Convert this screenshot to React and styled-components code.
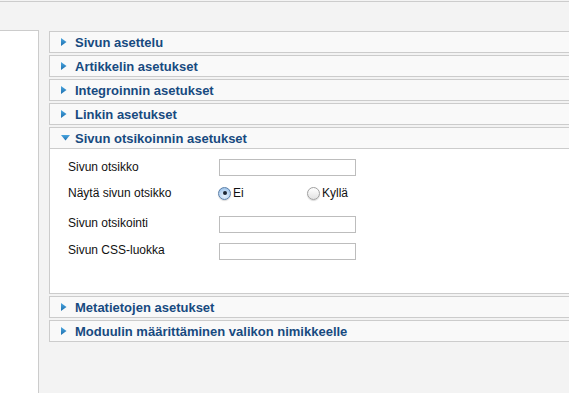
import React from "react";
import styled, { createGlobalStyle } from "styled-components";

const Global = createGlobalStyle`
  html, body { margin: 0; padding: 0; background: #f3f3f3; }
  body { font-family: "Liberation Sans", Arial, Helvetica, sans-serif; overflow: hidden; }
  #root { width: 569px; height: 393px; overflow: hidden; }
`;

const Page = styled.div`
  width: 569px;
  height: 393px;
  overflow: hidden;
  display: flex;
  flex-direction: column;
`;

const TopBar = styled.div`
  margin-top: 1px;
  height: 28px;
  border-top: 1px solid #cccccc;
  background: #f3f3f3;
  flex: none;
`;

const Main = styled.div`
  display: flex;
  gap: 10px;
  flex: 1;
`;

const SidePanel = styled.div`
  width: 38px;
  flex: none;
  background: #ffffff;
  border-top: 1px solid #cccccc;
  border-right: 1px solid #cccccc;
`;

const Accordion = styled.div`
  flex: 1;
  margin-right: -20px;
  padding-top: 1px;
  display: flex;
  flex-direction: column;
  gap: 2px;
`;

const Panel = styled.div`
  border: 1px solid #cccccc;
  background: #f9f9f9;
`;

const Header = styled.div`
  height: 20px;
  display: flex;
  align-items: center;
  padding-left: 11px;
  background: #f9f9f9;
  border-bottom: ${(p) => (p.$open ? "1px solid #cccccc" : "none")};
`;

const ArrowBox = styled.span`
  width: 14px;
  display: flex;
  align-items: center;
  justify-content: flex-start;
`;

const Title = styled.span`
  font-size: 13px;
  font-weight: bold;
  color: #174a80;
`;

const Content = styled.div`
  background: #ffffff;
  height: 144px;
  padding: 7px 0 0 18px;
  box-sizing: border-box;
`;

const Row = styled.div`
  display: flex;
  align-items: center;
  height: ${(p) => p.$h}px;
`;

const Label = styled.div`
  width: 151px;
  font-size: 12px;
  color: #111111;
  margin-top: ${(p) => p.$shift || 0}px;
`;

const TextInput = styled.div`
  width: 135px;
  height: 15px;
  border: 1px solid #bdbdbd;
  background: #ffffff;
`;

const RadioGroup = styled.div`
  display: flex;
  align-items: center;
`;

const RadioOption = styled.label`
  display: flex;
  align-items: center;
  width: ${(p) => p.$w}px;
  font-size: 12px;
  color: #111111;
`;

const RadioCircle = styled.span`
  width: 13px;
  height: 13px;
  border-radius: 50%;
  box-sizing: border-box;
  border: 1px solid ${(p) => (p.$checked ? "#5b7fa8" : "#a0a0a0")};
  background: ${(p) =>
    p.$checked
      ? "radial-gradient(circle at 50% 70%, #e6f1fc 0%, #b9d6f3 55%, #8cb6e2 100%)"
      : "linear-gradient(#ffffff, #e2e2e2)"};
  box-shadow: 0 1px 1px rgba(0, 0, 0, 0.15);
  display: flex;
  align-items: center;
  justify-content: center;
  margin-right: 2px;
  margin-left: -1px;
`;

const Dot = styled.span`
  width: 4px;
  height: 4px;
  border-radius: 50%;
  background: #1c2633;
`;

const RightArrow = () => (
  <svg width="6" height="8" viewBox="0 0 6 8">
    <defs>
      <linearGradient id="ra" x1="0" y1="0" x2="0" y2="1">
        <stop offset="0" stopColor="#4aa6e0" />
        <stop offset="1" stopColor="#1d6fae" />
      </linearGradient>
    </defs>
    <polygon points="0,0 5.5,4 0,8" fill="url(#ra)" />
  </svg>
);

const DownArrow = () => (
  <svg width="9" height="6" viewBox="0 0 9 6">
    <defs>
      <linearGradient id="da" x1="0" y1="0" x2="0" y2="1">
        <stop offset="0" stopColor="#4aa6e0" />
        <stop offset="1" stopColor="#1d6fae" />
      </linearGradient>
    </defs>
    <polygon points="0,0 9,0 4.5,5.5" fill="url(#da)" />
  </svg>
);

const ClosedPanel = ({ title }) => (
  <Panel>
    <Header>
      <ArrowBox>
        <RightArrow />
      </ArrowBox>
      <Title>{title}</Title>
    </Header>
  </Panel>
);

export default function App() {
  return (
    <>
      <Global />
      <Page>
        <TopBar />
        <Main>
          <SidePanel />
          <Accordion>
            <ClosedPanel title="Sivun asettelu" />
            <ClosedPanel title="Artikkelin asetukset" />
            <ClosedPanel title="Integroinnin asetukset" />
            <ClosedPanel title="Linkin asetukset" />
            <Panel>
              <Header $open>
                <ArrowBox>
                  <DownArrow />
                </ArrowBox>
                <Title>Sivun otsikoinnin asetukset</Title>
              </Header>
              <Content>
                <Row $h={22}>
                  <Label>Sivun otsikko</Label>
                  <TextInput />
                </Row>
                <Row $h={30}>
                  <Label>Näytä sivun otsikko</Label>
                  <RadioGroup>
                    <RadioOption $w={89}>
                      <RadioCircle $checked>
                        <Dot />
                      </RadioCircle>
                      Ei
                    </RadioOption>
                    <RadioOption $w={60}>
                      <RadioCircle />
                      Kyllä
                    </RadioOption>
                  </RadioGroup>
                </Row>
                <Row $h={32}>
                  <Label $shift={-3}>Sivun otsikointi</Label>
                  <TextInput />
                </Row>
                <Row $h={22}>
                  <Label $shift={-3}>Sivun CSS-luokka</Label>
                  <TextInput />
                </Row>
              </Content>
            </Panel>
            <ClosedPanel title="Metatietojen asetukset" />
            <ClosedPanel title="Moduulin määrittäminen valikon nimikkeelle" />
          </Accordion>
        </Main>
      </Page>
    </>
  );
}
